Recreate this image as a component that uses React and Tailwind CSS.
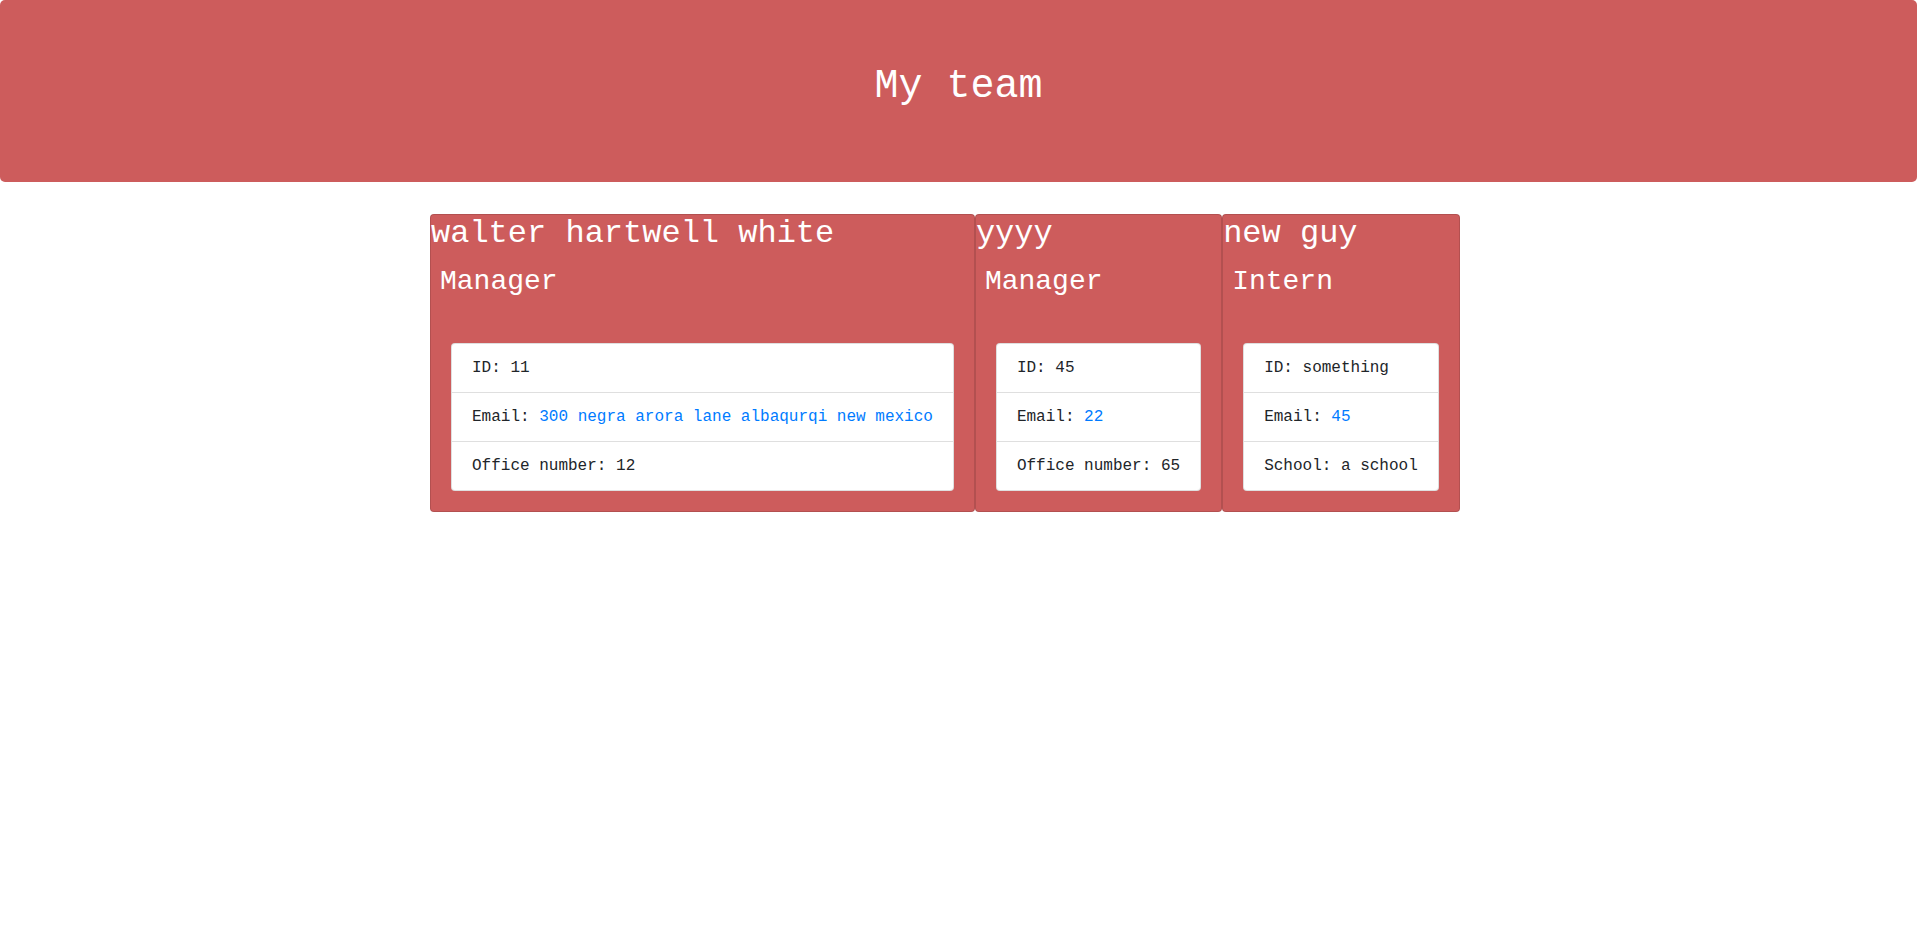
import React from "react";

const team = [
  {
    name: "walter hartwell white",
    role: "Manager",
    id: "11",
    email: "300 negra arora lane albaqurqi new mexico",
    extraLabel: "Office number",
    extra: "12",
  },
  {
    name: "yyyy",
    role: "Manager",
    id: "45",
    email: "22",
    extraLabel: "Office number",
    extra: "65",
  },
  {
    name: "new guy",
    role: "Intern",
    id: "something",
    email: "45",
    extraLabel: "School",
    extra: "a school",
  },
];

function Card({ m }) {
  return (
    <div className="w-fit shrink-0 rounded-[4px] border border-[rgba(0,0,0,0.125)] bg-[#cd5c5c] pb-[20px]">
      <h2 className="pt-[1px] text-[32px] leading-[36px] text-white whitespace-nowrap">{m.name}</h2>
      <h3 className="mt-[13px] pl-[9px] text-[28px] leading-[34px] text-white whitespace-nowrap">{m.role}</h3>
      <ul className="mx-[20px] mt-[44px] overflow-hidden rounded-[4px] border border-[rgba(0,0,0,0.125)] bg-white text-[16px] leading-[24px] text-[#212529]">
        <li className="whitespace-nowrap px-[20px] py-[12px]">ID: {m.id}</li>
        <li className="whitespace-nowrap border-t border-[rgba(0,0,0,0.125)] px-[20px] py-[12px]">
          Email: <a className="text-[#007bff]">{m.email}</a>
        </li>
        <li className="whitespace-nowrap border-t border-[rgba(0,0,0,0.125)] px-[20px] py-[12px]">
          {m.extraLabel}: {m.extra}
        </li>
      </ul>
    </div>
  );
}

export default function App() {
  return (
    <div className="min-h-[934px] bg-white font-['Liberation_Mono','Courier_New',monospace]">
      <header className="h-[182px] rounded-[5px] bg-[#cd5c5c] pt-[63px] text-center">
        <h1 className="text-[40px] leading-[48px] text-white">My team</h1>
      </header>
      <main className="mt-[32px] flex pl-[430px]">
        {team.map((m) => (
          <Card key={m.name} m={m} />
        ))}
      </main>
    </div>
  );
}
